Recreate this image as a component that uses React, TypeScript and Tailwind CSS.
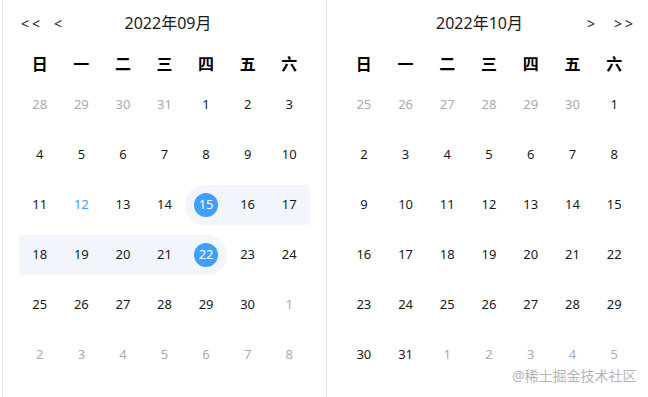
import React from "react";

type Cell = {
  d: number;
  t: "o" | "c";
  today?: boolean;
  r?: "s" | "e" | "i";
};

const o = (d: number): Cell => ({ d, t: "o" });
const c = (d: number, extra: Partial<Cell> = {}): Cell => ({ d, t: "c", ...extra });

const sep: Cell[] = [
  o(28), o(29), o(30), o(31), c(1), c(2), c(3),
  c(4), c(5), c(6), c(7), c(8), c(9), c(10),
  c(11), c(12, { today: true }), c(13), c(14), c(15, { r: "s" }), c(16, { r: "i" }), c(17, { r: "i" }),
  c(18, { r: "i" }), c(19, { r: "i" }), c(20, { r: "i" }), c(21, { r: "i" }), c(22, { r: "e" }), c(23), c(24),
  c(25), c(26), c(27), c(28), c(29), c(30), o(1),
  o(2), o(3), o(4), o(5), o(6), o(7), o(8),
];

const oct: Cell[] = [
  o(25), o(26), o(27), o(28), o(29), o(30), c(1),
  c(2), c(3), c(4), c(5), c(6), c(7), c(8),
  c(9), c(10), c(11), c(12), c(13), c(14), c(15),
  c(16), c(17), c(18), c(19), c(20), c(21), c(22),
  c(23), c(24), c(25), c(26), c(27), c(28), c(29),
  c(30), c(31), o(1), o(2), o(3), o(4), o(5),
];

const weekdays = ["日", "一", "二", "三", "四", "五", "六"];

function DayCell({ cell }: { cell: Cell }) {
  const band =
    cell.r === "s"
      ? "bg-[#f2f6fc] rounded-l-full"
      : cell.r === "e"
      ? "bg-[#f2f6fc] rounded-r-full"
      : cell.r === "i"
      ? "bg-[#f2f6fc]"
      : "";
  const selected = cell.r === "s" || cell.r === "e";
  const color =
    cell.t === "o" ? "text-[#a8abb2]" : cell.today ? "text-[#409eff]" : "text-[#1a1a1a]";
  return (
    <div className="h-[50px] flex items-center">
      <div className={`h-[40px] w-full flex items-center justify-center ${band}`}>
        {selected ? (
          <span className="w-[24px] h-[24px] rounded-full bg-[#409eff] text-white flex items-center justify-center">
            {cell.d}
          </span>
        ) : (
          <span className={color}>{cell.d}</span>
        )}
      </div>
    </div>
  );
}

function Panel({
  title,
  cells,
  side,
}: {
  title: string;
  cells: Cell[];
  side: "l" | "r";
}) {
  return (
    <div
      className={`w-[324px] shrink-0 px-[16px] ${
        side === "l" ? "border-r border-[#e4e7ed]" : ""
      }`}
    >
      <div className="h-[46px] flex items-center text-[#1a1a1a]">
        {side === "l" ? (
          <>
            <div className="flex items-center text-[14px] w-[45px] pl-[2px] pt-[1px]">
              <span className="tracking-[3px]">&lt;&lt;</span>
              <span className="ml-[11px]">&lt;</span>
            </div>
            <div className="flex-1 text-center text-[16px] pr-[38px]">{title}</div>
          </>
        ) : (
          <>
            <div className="flex-1 text-center text-[16px] pl-[30px]">{title}</div>
            <div className="flex items-center justify-end text-[14px] w-[49px] pt-[1px] pr-[2px]">
              <span>&gt;</span>
              <span className="ml-[19px] tracking-[3px] mr-[-3px]">&gt;&gt;</span>
            </div>
          </>
        )}
      </div>
      <div className="grid grid-cols-7 h-[34px] items-center">
        {weekdays.map((w) => (
          <div key={w} className="text-center text-[16px] font-bold text-black pt-[2px]">
            {w}
          </div>
        ))}
      </div>
      <div className="grid grid-cols-7 text-[13px]">
        {cells.map((cell, i) => (
          <DayCell key={i} cell={cell} />
        ))}
      </div>
    </div>
  );
}

export default function App() {
  return (
    <div
      className="w-[648px] h-[397px] bg-white overflow-hidden relative"
      style={{ fontFamily: '"Noto Sans", "Noto Sans CJK SC", sans-serif' }}
    >
      <div className="ml-[2px] h-full flex border-l border-[#e4e7ed]">
        <Panel title="2022年09月" cells={sep} side="l" />
        <Panel title="2022年10月" cells={oct} side="r" />
      </div>
      <div className="absolute left-[512px] top-[365px] text-[14px] text-[#b5b5b5] tracking-[0px]">
        @稀土掘金技术社区
      </div>
    </div>
  );
}
